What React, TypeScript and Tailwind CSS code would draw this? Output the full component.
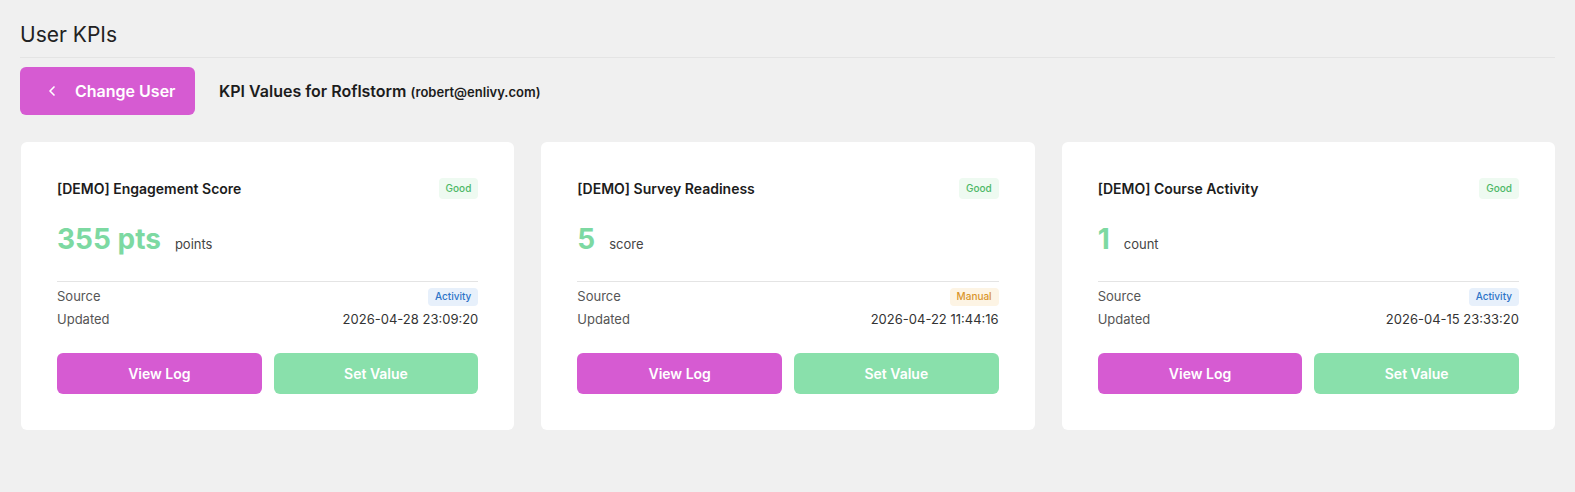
import { ChevronLeft } from "lucide-react";

type Kpi = {
  name: string;
  value: string;
  unit: string;
  status: string;
  source: "Activity" | "Manual";
  updated: string;
};

const kpis: Kpi[] = [
  {
    name: "[DEMO] Engagement Score",
    value: "355 pts",
    unit: "points",
    status: "Good",
    source: "Activity",
    updated: "2026-04-28 23:09:20",
  },
  {
    name: "[DEMO] Survey Readiness",
    value: "5",
    unit: "score",
    status: "Good",
    source: "Manual",
    updated: "2026-04-22 11:44:16",
  },
  {
    name: "[DEMO] Course Activity",
    value: "1",
    unit: "count",
    status: "Good",
    source: "Activity",
    updated: "2026-04-15 23:33:20",
  },
];

function SourceBadge({ source }: { source: Kpi["source"] }) {
  const styles =
    source === "Manual"
      ? "bg-[#fdf4e4] text-[#d9952a]"
      : "bg-[#e7f0fb] text-[#2d74c8]";
  return (
    <span className={`flex h-[18px] items-center rounded px-[7px] text-[10px] font-medium ${styles}`}>
      {source}
    </span>
  );
}

function KpiCard({ kpi }: { kpi: Kpi }) {
  return (
    <div className="rounded-md bg-white p-9">
      <div className="flex items-center justify-between">
        <h3 className="text-sm font-semibold text-[#1c1c1c]">{kpi.name}</h3>
        <span className="flex h-[21px] items-center rounded bg-[#eefaf1] px-[7px] text-[10px] font-medium text-[#4cb866]">
          {kpi.status}
        </span>
      </div>

      <div className="mt-[26px] flex items-baseline gap-3.5">
        <span className="text-[28px] font-bold leading-none text-[#7dd9a2]">{kpi.value}</span>
        <span className="text-[13px] text-[#444]">{kpi.unit}</span>
      </div>

      <div className="mt-[26px] border-t border-[#e4e4e4] pt-1.5">
        <div className="flex h-[18px] items-center justify-between text-[13px] text-[#555]">
          <span>Source</span>
          <SourceBadge source={kpi.source} />
        </div>
        <div className="mt-1 flex items-center justify-between text-[13px]">
          <span className="text-[#555]">Updated</span>
          <span className="text-[#333]">{kpi.updated}</span>
        </div>
      </div>

      <div className="mt-6 grid grid-cols-2 gap-3">
        <button className="h-[41px] rounded-md bg-[#d65bd2] text-sm font-semibold text-white">
          View Log
        </button>
        <button className="h-[41px] rounded-md bg-[#89e0ab] text-sm font-semibold text-white">
          Set Value
        </button>
      </div>
    </div>
  );
}

export default function App() {
  return (
    <div
      className="min-h-screen bg-[#f0f0f0] px-5 pt-[22px] pb-16"
      style={{ fontFamily: "Inter, 'Noto Sans', sans-serif" }}
    >
      <div className="w-[1535px]">
        <h1 className="pb-[9px] text-[21px] leading-[26px] text-[#222]">User KPIs</h1>
        <div className="border-t border-[#e4e4e4]" />

        <div className="mt-[9px] flex items-center gap-6">
          <button className="flex h-[48px] w-[175px] items-center rounded-md bg-[#d65bd2] pl-6 text-base font-semibold text-white">
            <ChevronLeft className="h-4 w-4" strokeWidth={2.5} />
            <span className="ml-[15px]">Change User</span>
          </button>
          <p className="text-base font-semibold text-[#1c1c1c]">
            KPI Values for Roflstorm{" "}
            <span className="text-[13px]">(robert@enlivy.com)</span>
          </p>
        </div>

        <div className="mt-[27px] grid grid-cols-3 gap-[27px] pl-px">
          {kpis.map((kpi) => (
            <KpiCard key={kpi.name} kpi={kpi} />
          ))}
        </div>
      </div>
    </div>
  );
}
